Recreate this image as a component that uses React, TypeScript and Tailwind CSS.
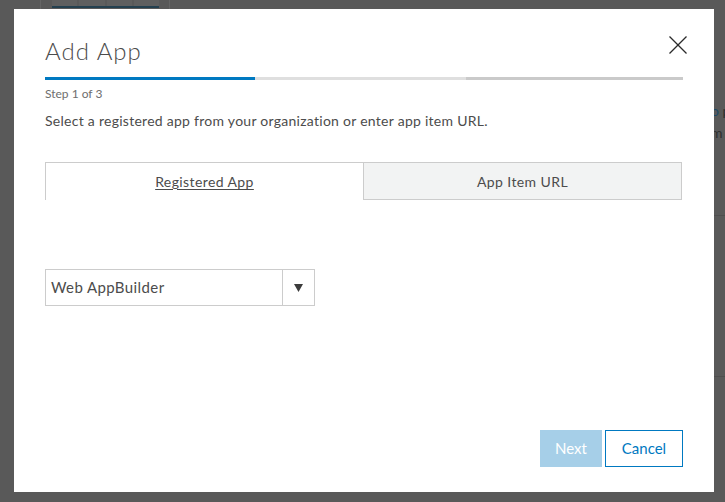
import React from 'react';

const CloseIcon: React.FC = () => (
    <svg width="18" height="18" viewBox="0 0 18 18" fill="none" stroke="#2b2b2b" strokeWidth="1.3">
        <line x1="0.5" y1="0.5" x2="17.5" y2="17.5" />
        <line x1="17.5" y1="0.5" x2="0.5" y2="17.5" />
    </svg>
);

const App: React.FC = () => {
    return (
        <div className="relative w-[725px] h-[502px] overflow-hidden bg-[#595959] font-['Lato','Liberation_Sans',sans-serif]">
            {/* Page behind the overlay */}
            <div className="absolute left-[40px] top-0 w-[130px] h-[40px] border-x border-[#656565]">
                <div className="flex gap-[2px] ml-[11px] w-[107px] h-[6px]">
                    <div className="flex-1 bg-[#5f5f5f]" />
                    <div className="flex-1 bg-[#5f5f5f]" />
                    <div className="flex-1 bg-[#5f5f5f]" />
                    <div className="flex-1 bg-[#5f5f5f]" />
                </div>
                <div className="ml-[11px] w-[107px] h-[2px] bg-[#24404f]" />
            </div>
            <div className="absolute left-[711px] top-[100px] text-[14px] leading-[22px] text-[#2e2e2e] whitespace-nowrap">
                <div><span className="text-[#1e4a66]">o</span> p</div>
                <div>m</div>
            </div>
            <div className="absolute left-[714px] top-[215px] w-[20px] h-px bg-[#4e4e4e]" />
            <div className="absolute left-[714px] top-[376px] w-[20px] h-px bg-[#4e4e4e]" />

            {/* Dialog */}
            <div className="absolute left-[14px] top-[9px] w-[700px] h-[483px] bg-white flex flex-col px-[31px] pt-[26px] pb-[25px]">
                <div className="flex items-start justify-between">
                    <h1 className="text-[24px] leading-[32px] font-light text-[#4c4c4c] tracking-[1px]">Add App</h1>
                    <button className="mt-[1px] mr-[-4px]">
                        <CloseIcon />
                    </button>
                </div>

                <div className="flex mt-[10px] h-[3px]">
                    <div className="w-[210px] bg-[#0079c1]" />
                    <div className="w-[211px] bg-[#dfdfdf]" />
                    <div className="flex-1 bg-[#cacaca]" />
                </div>

                <p className="mt-[6px] text-[12px] leading-[16px] text-[#6e6e6e]">Step 1 of 3</p>
                <p className="mt-[9px] text-[14px] leading-[20px] text-[#4c4c4c] tracking-[0.27px]">
                    Select a registered app from your organization or enter app item URL.
                </p>

                {/* Tabs */}
                <div className="grid grid-cols-[318px_1fr] mt-[31px] h-[38px] mr-[1px] text-[14px] text-[#4c4c4c] tracking-[0.4px]">
                    <div className="flex items-center justify-center border-l border-t border-[#cccccc] bg-white">
                        <span className="underline underline-offset-[2px]">Registered App</span>
                    </div>
                    <div className="flex items-center justify-center border border-[#cccccc] bg-[#f2f3f3]">
                        App Item URL
                    </div>
                </div>

                {/* Select */}
                <div className="flex mt-[69px] w-[270px] h-[37px] border border-[#cccccc] text-[15px] text-[#4c4c4c] tracking-[0.4px]">
                    <div className="flex-1 flex items-center pl-[5px]">Web AppBuilder</div>
                    <div className="w-[32px] border-l border-[#cccccc] flex items-center justify-center">
                        <svg width="9" height="8" viewBox="0 0 9 8">
                            <polygon points="0,0 9,0 4.5,8" fill="#3c3c3c" />
                        </svg>
                    </div>
                </div>

                {/* Footer buttons */}
                <div className="mt-auto flex justify-end gap-[3px] text-[15px]">
                    <button className="w-[62px] h-[37px] bg-[#a6cfe8] text-white">Next</button>
                    <button className="w-[78px] h-[37px] border border-[#0079c1] text-[#0079c1] bg-white">Cancel</button>
                </div>
            </div>
        </div>
    );
};

export default App;
